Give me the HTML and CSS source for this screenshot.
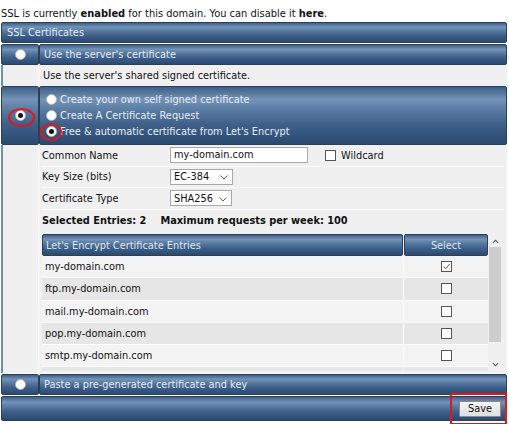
FILE: index.html
```html
<!DOCTYPE html>
<html>
<head>
<meta charset="utf-8">
<link rel="stylesheet" href="styles.css">
</head>
<body>
<div class="intro">SSL is currently <b>enabled</b> for this domain. You can disable it <b>here</b>.</div>
<div class="panel">
  <div class="bar hdr">SSL Certificates</div>
  <div class="row">
    <div class="cellL bar"><span class="radio"></span></div>
    <div class="cellR bar">Use the server's certificate</div>
  </div>
  <div class="row">
    <div class="cellL light"></div>
    <div class="cellR light desc">Use the server's shared signed certificate.</div>
  </div>
  <div class="row tall">
    <div class="cellL bar"><span class="radio on"></span><span class="ring ring1"></span></div>
    <div class="cellR bar options">
      <div class="opt"><span class="radio"></span>Create your own self signed certificate</div>
      <div class="opt"><span class="radio"></span>Create A Certificate Request</div>
      <div class="opt"><span class="radio on"></span><span class="ring ring2"></span>Free &amp; automatic certificate from Let's Encrypt</div>
    </div>
  </div>
  <div class="row">
    <div class="cellL light"></div>
    <div class="cellR light body">
      <div class="frow">
        <span class="lbl">Common Name</span>
        <span class="input">my-domain.com</span>
        <span class="cb"></span><span class="cblbl">Wildcard</span>
      </div>
      <div class="frow">
        <span class="lbl">Key Size (bits)</span>
        <span class="select s1">EC-384<svg viewBox="0 0 8 5" class="chev"><path d="M0.5 0.5 L4 4 L7.5 0.5" fill="none" stroke="#666" stroke-width="1"/></svg></span>
      </div>
      <div class="frow">
        <span class="lbl">Certificate Type</span>
        <span class="select s2">SHA256<svg viewBox="0 0 8 5" class="chev"><path d="M0.5 0.5 L4 4 L7.5 0.5" fill="none" stroke="#666" stroke-width="1"/></svg></span>
      </div>
      <div class="frow summary"><b>Selected Entries: 2</b><b class="max">Maximum requests per week: 100</b></div>
      <div class="tablewrap">
        <div class="tbl">
          <div class="trow th"><div class="c1">Let's Encrypt Certificate Entries</div><div class="c2">Select</div></div>
          <div class="trow odd"><div class="c1">my-domain.com</div><div class="c2"><span class="box checked"><svg viewBox="0 0 10 10"><path d="M2 5 L4.2 7.4 L8.5 2.2" fill="none" stroke="#444" stroke-width="1"/></svg></span></div></div>
          <div class="trow even"><div class="c1">ftp.my-domain.com</div><div class="c2"><span class="box"></span></div></div>
          <div class="trow odd"><div class="c1">mail.my-domain.com</div><div class="c2"><span class="box"></span></div></div>
          <div class="trow even"><div class="c1">pop.my-domain.com</div><div class="c2"><span class="box"></span></div></div>
          <div class="trow odd"><div class="c1">smtp.my-domain.com</div><div class="c2"><span class="box"></span></div></div>
          <div class="trow even"><div class="c1"></div><div class="c2"></div></div>
        </div>
        <div class="sbar">
          <svg class="arr" viewBox="0 0 8 5"><path d="M1 4 L4 1 L7 4" fill="none" stroke="#555" stroke-width="1.2"/></svg>
          <div class="track"><div class="thumb"></div></div>
          <svg class="arr" viewBox="0 0 8 5"><path d="M1 1 L4 4 L7 1" fill="none" stroke="#555" stroke-width="1.2"/></svg>
        </div>
      </div>
    </div>
  </div>
  <div class="row paste">
    <div class="cellL bar"><span class="radio"></span></div>
    <div class="cellR bar">Paste a pre-generated certificate and key</div>
  </div>
  <div class="bar foot">
    <button class="save">Save</button>
    <span class="savering"></span>
  </div>
</div>
</body>
</html>
```
FILE: styles.css
```css
* { box-sizing: border-box; }
html, body { margin: 0; padding: 0; background: #fff; }
body {
  font-family: "DejaVu Sans", Verdana, sans-serif;
  font-size: 9.8px;
  color: #111;
  width: 509px;
  height: 424px;
  overflow: hidden;
}
.intro {
  height: 22px;
  padding-top: 8px;
  padding-left: 1px;
  line-height: 12px;
  font-size: 9.9px;
}
.intro b { font-weight: bold; }
.panel {
  width: 506px;
  margin-left: 1px;
  display: flex;
  flex-direction: column;
}
.bar {
  background: linear-gradient(#3f5f86 0%, #7493b8 22%, #5a7ca3 40%, #3e608a 65%, #2a4a70 100%);
  color: #e6edf5;
  border: 1px solid #2b3f58;
  border-radius: 2px;
}
.hdr {
  height: 21px;
  line-height: 19px;
  padding-left: 5px;
}
.row {
  display: flex;
}
.row > .cellL {
  width: 38px;
  flex: 0 0 38px;
  display: flex;
  align-items: center;
  justify-content: center;
  position: relative;
}
.row > .cellR {
  flex: 1;
  padding-left: 4px;
  display: flex;
  align-items: center;
  white-space: nowrap;
}
.row:nth-child(2) { height: 21px; margin-top: 1px; }
.row:nth-child(2) > .cellL, .row:nth-child(2) > .cellR { height: 21px; }
.light {
  background: #f0f0f0;
  color: #111;
}
.cellL.light {
  border-left: 2px solid #6f8fb4;
  border-right: 1px solid #fff;
}
.desc { height: 21px; }
.tall { height: 59px; }
.options {
  flex-direction: column;
  align-items: flex-start !important;
  justify-content: center;
  padding-left: 6px !important;
}
.opt {
  height: 16px;
  display: flex;
  align-items: center;
  position: relative;
}
.opt .radio { margin-right: 3px; }
.radio {
  display: inline-block;
  width: 11px;
  height: 11px;
  border-radius: 50%;
  background: #fff;
  border: 1px solid #b0b0b0;
  position: relative;
  flex: 0 0 11px;
}
.radio.on::after {
  content: "";
  position: absolute;
  left: 2px; top: 2px;
  width: 5px; height: 5px;
  border-radius: 50%;
  background: #111;
}
.ring {
  position: absolute;
  border: 2px solid #e01818;
  border-radius: 50%;
}
.ring1 { width: 27px; height: 19px; left: 6px; top: 21px; }
.ring2 { width: 22px; height: 18px; left: -6px; top: -1px; }
.body {
  flex-direction: column;
  align-items: stretch !important;
  padding-left: 3px !important;
  padding-right: 3px;
  padding-bottom: 2px;
}
.frow {
  height: 21.5px;
  display: flex;
  align-items: center;
  border-bottom: 1px solid #fafafa;
}
.lbl { width: 128px; }
.input {
  width: 138px;
  height: 16px;
  background: #fff;
  border: 1px solid #a9a9a9;
  padding-left: 3px;
  line-height: 14px;
}
.cb {
  width: 11px;
  height: 11px;
  border: 1px solid #555;
  background: #fff;
  margin-left: 17px;
  margin-right: 5px;
}
.select {
  height: 16px;
  background: #fff;
  border: 1px solid #a9a9a9;
  padding-left: 3px;
  display: flex;
  align-items: center;
  justify-content: space-between;
  padding-right: 4px;
}
.s1 { width: 63px; }
.s2 { width: 62px; }
.chev { width: 8px; height: 5px; margin-top: 2px; }
.summary { border-bottom: none; }
.summary .max { margin-left: 14px; }
.tablewrap {
  margin-top: 3px;
  height: 137px;
  display: flex;
  overflow: hidden;
}
.tbl {
  width: 446px;
  display: flex;
  flex-direction: column;
}
.trow {
  display: flex;
  height: 22.3px;
  flex: 0 0 22.3px;
  border-bottom: 1px solid #fff;
}
.trow .c1 {
  flex: 1;
  padding-left: 3px;
  display: flex;
  align-items: center;
  border-right: 1px solid #fff;
}
.trow .c2 {
  width: 84px;
  display: flex;
  align-items: center;
  justify-content: center;
}
.th { height: 22px; flex-basis: 22px; border-bottom: none; }
.th .c1, .th .c2 {
  background: linear-gradient(#3f5f86 0%, #7493b8 22%, #5a7ca3 40%, #3e608a 65%, #2a4a70 100%);
  color: #dfe7f0;
  border: 1px solid #2b3f58;
  border-radius: 2px;
}
.th .c1 { margin-right: 1px; }
.odd { background: #f3f3f3; }
.even { background: #e6e6e6; }
.box {
  width: 11px;
  height: 11px;
  border: 1px solid #555;
  background: #fff;
  display: inline-flex;
}
.box svg { width: 9px; height: 9px; }
.sbar {
  width: 14px;
  display: flex;
  flex-direction: column;
  align-items: center;
  background: #f0f0f0;
}
.arr { width: 7px; height: 5px; margin: 5px 0 4px; }
.track { flex: 1; width: 100%; padding: 0 1px; }
.thumb { background: #cdcdcd; height: 95px; margin-top: -1px; width: 100%; }
.paste { height: 21px; margin-top: 1px; }
.paste > .cellL, .paste > .cellR { height: 21px; }
.foot {
  height: 25px;
  margin-top: 1px;
  display: flex;
  justify-content: flex-end;
  align-items: center;
  position: relative;
  padding-right: 5px;
}
.savering {
  position: absolute;
  right: -1px;
  top: -4px;
  width: 57px;
  height: 32px;
  border: 2px solid #e01818;
}
.save {
  font-family: "DejaVu Sans", Verdana, sans-serif;
  font-size: 9.8px;
  color: #111;
  height: 16px;
  width: 42px;
  padding: 0;
  background: linear-gradient(#f6f6f6, #dedede);
  border: 1px solid #8a8a8a;
  border-radius: 1px;
}
```
